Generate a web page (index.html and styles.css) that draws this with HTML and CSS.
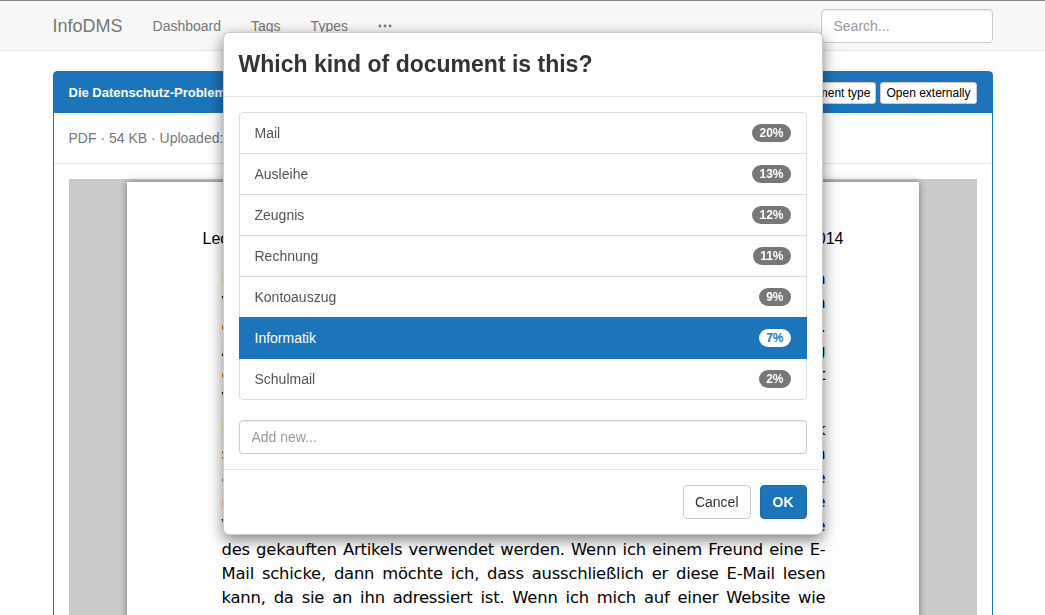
FILE: index.html
```html
<!DOCTYPE html>
<html lang="de">
<head>
<meta charset="utf-8">
<title>InfoDMS</title>
<link rel="stylesheet" href="styles.css">
</head>
<body>
<nav class="navbar">
  <div class="container nav-inner">
    <a class="brand">InfoDMS</a>
    <ul class="nav">
      <li><a>Dashboard</a></li>
      <li><a>Tags</a></li>
      <li><a>Types</a></li>
      <li><a class="more"><svg width="14" height="4" viewBox="0 0 14 4"><circle cx="2" cy="2" r="1.4" fill="#777"/><circle cx="7" cy="2" r="1.4" fill="#777"/><circle cx="12" cy="2" r="1.4" fill="#777"/></svg></a></li>
    </ul>
    <input class="search" type="text" placeholder="Search...">
  </div>
</nav>

<main class="container">
  <section class="panel">
    <div class="panel-heading">
      <span class="panel-title">Die Datenschutz-Probleme von Google, Facebook und Co.</span>
      <div class="actions">
        <button class="btn-xs">Change document type</button>
        <button class="btn-xs">Open externally</button>
      </div>
    </div>
    <div class="panel-body meta">PDF · 54 KB · Uploaded: 13.05.2014 10:42</div>
    <div class="panel-body viewer-wrap">
      <div class="viewer">
        <div class="page">
          <div class="doc-head"><span>Leonhard Martin</span><span>Informatik und Gesellschaft</span><span>13. Mai 2014</span></div>
          <p class="para">
            <span class="ln">Die Datenschutz-Probleme großer Internetfirmen sind seit Jahren</span>
            <span class="ln">Verbraucherschützer kritisieren, dass zu viele persönliche Daten</span>
            <span class="ln">gesammelt und ausgewertet werden, ohne dass die Nutzer es wissen.</span>
            <span class="ln">Auf diese Weise entstehen sehr genaue Profile, die für Werbung</span>
            <span class="ln">eine Vielzahl anderer Zwecke verwendet werden können. Das betrifft</span>
            <span class="ln last">Vor allem E-Mails, Suchanfragen und Standortdaten.</span>
          </p>
          <p class="para">
            <span class="ln">Datenschutz bedeutet für mich, dass meine Daten nur für den Zweck</span>
            <span class="ln">so verwendet werden, für den ich sie auch angegeben habe. Wenn</span>
            <span class="ln">an einen Online-Shop meine Adresse übermittelt wird, soll diese</span>
            <span class="ln">nur für die Abwicklung der Bestellung und die Lieferung sowie</span>
            <span class="ln">Versand und Rechnungsstellung oder die Rückgabe und Garantie</span>
            <span class="ln">des gekauften Artikels verwendet werden. Wenn ich einem Freund eine E-</span>
            <span class="ln">Mail schicke, dann möchte ich, dass ausschließlich er diese E-Mail lesen</span>
            <span class="ln">kann, da sie an ihn adressiert ist. Wenn ich mich auf einer Website wie</span>
            <span class="ln">Facebook anmelde, erwarte ich, dass meine Daten geschützt bleiben.</span>
          </p>
        </div>
      </div>
    </div>
  </section>
</main>

<div class="modal">
  <div class="modal-dialog">
    <div class="modal-header">
      <h4 class="modal-title">Which kind of document is this?</h4>
    </div>
    <div class="modal-body">
      <ul class="list-group">
        <li class="list-group-item"><span>Mail</span><span class="badge">20%</span></li>
        <li class="list-group-item"><span>Ausleihe</span><span class="badge">13%</span></li>
        <li class="list-group-item"><span>Zeugnis</span><span class="badge">12%</span></li>
        <li class="list-group-item"><span>Rechnung</span><span class="badge">11%</span></li>
        <li class="list-group-item"><span>Kontoauszug</span><span class="badge">9%</span></li>
        <li class="list-group-item active"><span>Informatik</span><span class="badge">7%</span></li>
        <li class="list-group-item"><span>Schulmail</span><span class="badge">2%</span></li>
      </ul>
      <input class="form-control" type="text" placeholder="Add new...">
    </div>
    <div class="modal-footer">
      <button class="btn btn-default">Cancel</button>
      <button class="btn btn-primary">OK</button>
    </div>
  </div>
</div>
</body>
</html>
```

FILE: styles.css
```css
* { box-sizing: border-box; }

html, body {
  margin: 0;
  height: 100%;
  overflow: hidden;
}

body {
  font-family: "Liberation Sans", Arial, sans-serif;
  font-size: 14px;
  line-height: 20px;
  color: #333;
  background: #fff;
}

.container {
  width: 970px;
  margin: 0 auto;
  padding: 0 15px;
}

/* Navbar */
.navbar {
  background: #f8f8f8;
  border-top: 1px solid #8a8a8a;
  border-bottom: 1px solid #e7e7e7;
  height: 51px;
  margin-bottom: 20px;
}

.nav-inner {
  display: flex;
  align-items: center;
  height: 49px;
}

.brand {
  margin-left: -15px;
  padding: 15px;
  font-size: 18px;
  line-height: 20px;
  color: #777;
}

.nav {
  display: flex;
  list-style: none;
  margin: 0;
  padding: 0;
}

.nav a {
  display: block;
  padding: 15px;
  color: #777;
  font-size: 14px;
  line-height: 20px;
}

.nav .more {
  display: flex;
  align-items: center;
  height: 49px;
  padding-top: 2px;
  padding-bottom: 0;
}

.nav .more svg { display: block; }

.search {
  margin-left: auto;
  width: 172px;
  height: 34px;
  padding: 6px 12px;
  font-family: "Liberation Sans", Arial, sans-serif;
  font-size: 14px;
  color: #555;
  background: #fff;
  border: 1px solid #ccc;
  border-radius: 4px;
  box-shadow: inset 0 1px 1px rgba(0,0,0,.075);
}

.search::placeholder,
.form-control::placeholder { color: #999; }

/* Panel */
.panel {
  border: 1px solid #1c75bb;
  border-radius: 4px;
  background: #fff;
}

.panel-heading {
  display: flex;
  align-items: center;
  background: #1c75bb;
  color: #fff;
  padding: 10px 15px 9px;
}

.panel-title {
  flex: 1;
  font-size: 13px;
  font-weight: bold;
  white-space: nowrap;
  overflow: hidden;
}

.actions {
  display: flex;
  gap: 4px;
}

.btn-xs {
  font-family: "Liberation Sans", Arial, sans-serif;
  font-size: 12px;
  line-height: 18px;
  padding: 1px 5px;
  color: #000;
  background: #fff;
  border: 1px solid #ccc;
  border-radius: 3px;
}

.panel-body {
  padding: 15px;
}

.meta {
  color: #777;
}

.viewer-wrap {
  border-top: 1px solid #e5e5e5;
}

.viewer {
  background: #cbcbcb;
  padding: 3px 0 0;
  height: 700px;
}

.page {
  width: 792px;
  margin: 0 auto;
  height: 900px;
  background: #fff;
  box-shadow: 0 0 7px rgba(0,0,0,.45);
  padding-top: 45px;
  color: #000;
}

.doc-head {
  display: flex;
  justify-content: space-between;
  padding: 0 75px 0 76px;
  font-family: "Liberation Sans", Arial, sans-serif;
  font-size: 16px;
  line-height: 24px;
}

.para {
  margin: 16px 0 0;
  padding: 0 93px 0 95px;
  font-family: "DejaVu Sans", Verdana, sans-serif;
  font-size: 16.4px;
  letter-spacing: -0.2px;
  line-height: 24px;
}

.para + .para { margin-top: 7px; }

.ln {
  display: block;
  white-space: nowrap;
  text-align: justify;
  text-align-last: justify;
}

.ln.last { text-align-last: left; }

/* Modal */
.modal {
  position: fixed;
  inset: 0;
}

.modal-dialog {
  width: 600px;
  margin: 32px auto 0;
  background: #fff;
  border: 1px solid rgba(0,0,0,.2);
  border-radius: 6px;
  box-shadow: 0 5px 15px rgba(0,0,0,.5);
}

.modal-header {
  padding: 15px;
  border-bottom: 1px solid #e5e5e5;
}

.modal-title {
  margin: 0;
  font-size: 23px;
  line-height: 33px;
  font-weight: bold;
  color: #333;
}

.modal-body {
  padding: 15px;
}

.list-group {
  list-style: none;
  margin: 0 0 20px;
  padding: 0;
}

.list-group-item {
  display: flex;
  justify-content: space-between;
  align-items: center;
  padding: 10px 15px;
  margin-bottom: -1px;
  border: 1px solid #ddd;
  color: #555;
  background: #fff;
}

.list-group-item:first-child {
  border-top-left-radius: 4px;
  border-top-right-radius: 4px;
}

.list-group-item:last-child {
  margin-bottom: 0;
  border-bottom-left-radius: 4px;
  border-bottom-right-radius: 4px;
}

.list-group-item.active {
  background: #1c75bb;
  border-color: #1c75bb;
  color: #fff;
  position: relative;
}

.badge {
  display: inline-block;
  min-width: 10px;
  padding: 3px 7px;
  font-size: 12px;
  font-weight: bold;
  line-height: 12px;
  color: #fff;
  background: #777;
  border-radius: 10px;
}

.active .badge {
  background: #fff;
  color: #1c75bb;
}

.form-control {
  display: block;
  width: 100%;
  height: 34px;
  padding: 6px 12px;
  font-family: "Liberation Sans", Arial, sans-serif;
  font-size: 14px;
  color: #555;
  background: #fff;
  border: 1px solid #ccc;
  border-radius: 4px;
  box-shadow: inset 0 1px 1px rgba(0,0,0,.075);
}

.modal-footer {
  display: flex;
  justify-content: flex-end;
  gap: 9px;
  padding: 15px;
  border-top: 1px solid #e5e5e5;
}

.btn {
  height: 34px;
  padding: 6px 12px;
  font-family: "Liberation Sans", Arial, sans-serif;
  font-size: 14px;
  line-height: 20px;
  border-radius: 4px;
  border: 1px solid transparent;
}

.btn-default {
  color: #333;
  background: #fff;
  border-color: #ccc;
  padding: 6px 11px;
}

.btn-primary {
  color: #fff;
  background: #1c75bb;
  border-color: #1a6cad;
  font-weight: bold;
}
```
